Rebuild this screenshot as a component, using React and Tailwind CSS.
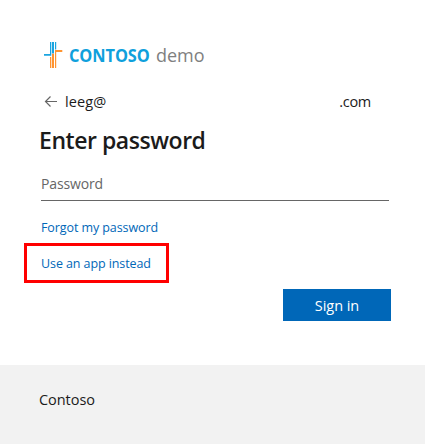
function ContosoMark() {
  return (
    <svg width="20" height="28" viewBox="0 0 20 28" className="shrink-0" fill="none" aria-hidden="true">
      <g fill="#1ba5e0">
        <path d="M6 1h1.3v13.8H0v-1.7h6z" />
        <path d="M8 1h2v11.4H8z" />
        <path d="M11 1h1.2v7.5H11z" />
      </g>
      <g fill="#ff9430">
        <path d="M11 9.1h7.3v1.8h-6.1V27H11z" />
        <path d="M8 12.8h2V27H8z" />
        <path d="M6 16h1.3v11H6z" />
      </g>
    </svg>
  );
}

function BackArrow() {
  return (
    <svg width="14" height="12" viewBox="0 0 14 12" fill="none" stroke="#666" strokeWidth="1.2" aria-hidden="true">
      <path d="M13 6.5H1.5M6.5 1.5l-5 5 5 5" />
    </svg>
  );
}

export default function App() {
  return (
    <div className="flex h-[444px] w-[425px] flex-col overflow-hidden bg-white font-['Open_Sans',sans-serif] text-[#1b1b1b]">
      <main className="flex h-[365px] flex-col pt-[41px] pl-[39px]">
        <div className="flex h-7 items-center pl-[5px]">
          <ContosoMark />
          <div className="ml-[5px] flex gap-[6px] text-[18px] leading-7 whitespace-nowrap">
            <span className="w-[81px] origin-left scale-x-[0.91] font-bold tracking-[-0.1px] text-[#0fa0dc]">CONTOSO</span>
            <span className="text-[#808080]">demo</span>
          </div>
        </div>
        <div className="mt-[22px] flex h-5 w-[332px] items-center pl-[5px] text-[14.5px] leading-5">
          <button aria-label="Back"><BackArrow /></button>
          <span className="relative top-px ml-[7px] tracking-[0.1px]">leeg@</span>
          <span className="relative top-px ml-auto tracking-[-0.3px]">.com</span>
        </div>
        <h1 className="mt-[13px] h-8 text-[23px] leading-8 font-semibold tracking-[-0.45px] whitespace-nowrap">Enter password</h1>
        <div className="mt-[13px] ml-[2px] h-[32px] w-[348px] border-b border-[#666] pt-[3px] text-[14px] leading-6 tracking-[-0.15px] text-[#666]">Password</div>
        <a className="mt-[17px] ml-[2px] h-5 text-[12.5px] leading-5 tracking-[-0.09px] whitespace-nowrap text-[#0067b8]">Forgot my password</a>
        <div className="mt-[5px] -ml-[15px] flex h-10 w-[145px] shrink-0 items-center border-3 border-[#f00] pt-px pl-[14px]">
          <a className="text-[12.5px] leading-5 tracking-[-0.09px] whitespace-nowrap text-[#0067b8]">Use an app instead</a>
        </div>
        <button className="mt-[6px] ml-[244px] h-8 w-[108px] shrink-0 bg-[#0067b8] pt-px text-[14.5px] leading-8 font-medium tracking-[-0.05px] text-white">Sign in</button>
      </main>
      <footer className="h-[79px] bg-[#f2f2f2] pt-[25px] pl-[39px] text-[14.5px] leading-5 tracking-[-0.05px]">Contoso</footer>
    </div>
  );
}
